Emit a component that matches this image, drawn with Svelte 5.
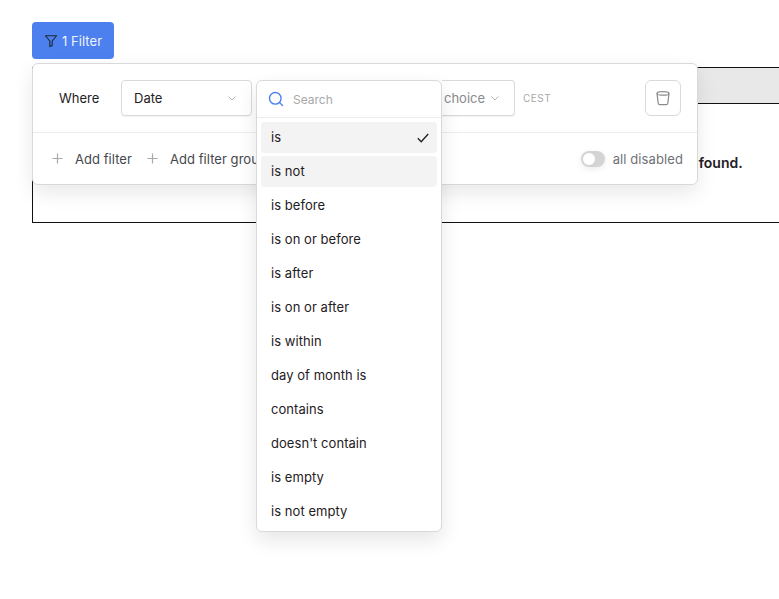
<script>
  const operators = [
    "is", "is not", "is before", "is on or before", "is after", "is on or after",
    "is within", "day of month is", "contains", "doesn't contain", "is empty", "is not empty"
  ];
  let selected = "is";
  let hovered = "is not";
</script>

<main>
  <button class="filter-btn">
    <svg width="14" height="14" viewBox="0 0 24 24" fill="none" stroke="#1f2937" stroke-width="2" stroke-linejoin="round" stroke-linecap="round">
      <path d="M2.5 3h19l-7.5 9v8l-4 1.5V12z" />
    </svg>
    1 Filter
  </button>

  <div class="stage">
    <div class="table">
      <div class="thead"></div>
      <div class="empty">No results found.</div>
    </div>

    <div class="panel">
      <div class="row">
        <span class="where">Where</span>
        <div class="select date">
          <span>Date</span>
          <svg class="chev" width="10" height="10" viewBox="0 0 10 10" fill="none" stroke="#b5b5b5" stroke-width="1">
            <path d="M1.5 3.5 5 7l3.5-3.5" />
          </svg>
        </div>
        <div class="select op-slot"></div>
        <div class="select value">
          <span>choice</span>
          <svg class="chev" width="10" height="10" viewBox="0 0 10 10" fill="none" stroke="#b5b5b5" stroke-width="1">
            <path d="M1.5 3.5 5 7l3.5-3.5" />
          </svg>
        </div>
        <span class="tz">CEST</span>
        <button class="trash" aria-label="Delete filter">
          <svg width="16" height="16" viewBox="0 0 16 16" fill="none" stroke="#8a8a8a" stroke-width="1.2">
            <ellipse cx="8" cy="3.4" rx="6" ry="1.8" />
            <path d="M2 3.4l1.2 9.8c.1.9.8 1.5 1.7 1.5h6.2c.9 0 1.6-.6 1.7-1.5L14 3.4" />
          </svg>
        </button>
      </div>
      <div class="footer">
        <button class="add">
          <svg width="11" height="11" viewBox="0 0 11 11" stroke="#a8a8a8" stroke-width="1.2"><path d="M5.5.5v10M.5 5.5h10" /></svg>
          Add filter
        </button>
        <button class="add">
          <svg width="11" height="11" viewBox="0 0 11 11" stroke="#a8a8a8" stroke-width="1.2"><path d="M5.5.5v10M.5 5.5h10" /></svg>
          Add filter group
        </button>
        <div class="toggle-wrap">
          <span class="toggle"><span class="knob"></span></span>
          <span>all disabled</span>
        </div>
      </div>
    </div>

    <div class="dropdown">
      <div class="search">
        <svg width="16" height="16" viewBox="0 0 16 16" fill="none" stroke="#4c80ee" stroke-width="1.4" stroke-linecap="round">
          <circle cx="7.3" cy="7.3" r="5.8" />
          <path d="M11.5 11.5 14.5 14.5" />
        </svg>
        <span>Search</span>
      </div>
      <ul>
        {#each operators as op}
          <li class:selected={op === selected} class:hovered={op === hovered}>
            {op}
            {#if op === selected}
              <svg width="12" height="10" viewBox="0 0 12 10" fill="none" stroke="#1f2023" stroke-width="1.3">
                <path d="M.8 5.2 4.2 8.8 11.2 1" />
              </svg>
            {/if}
          </li>
        {/each}
      </ul>
    </div>
  </div>
</main>

<style>
  :global(body) {
    margin: 0;
    background: #fff;
    overflow: hidden;
  }
  main {
    height: 599px;
    padding: 22px 0 0 32px;
    box-sizing: border-box;
    overflow: hidden;
    font-family: Inter, "Liberation Sans", sans-serif;
    font-size: 13px;
    color: #1f2023;
  }
  button {
    font: inherit;
    cursor: pointer;
  }
  .filter-btn {
    display: flex;
    align-items: center;
    gap: 4px;
    width: 82px;
    height: 37px;
    padding: 0 0 0 12px;
    border: none;
    border-radius: 4px;
    background: #4c80ee;
    color: #eef3fe;
    letter-spacing: 0.05px;
  }
  .stage {
    position: relative;
    margin-top: 8px;
  }
  .table {
    width: 1304px;
    height: 156px;
    box-sizing: border-box;
    border: 1px solid #111;
    border-width: 1px 0 1px 1px;
  }
  .thead {
    height: 35px;
    background: #e8e8e8;
    border-bottom: 1px solid #111;
  }
  .empty {
    height: 119px;
    box-sizing: border-box;
    padding-top: 50px;
    text-align: center;
    font-size: 14px;
    font-weight: 600;
    line-height: 17px;
    color: #1f2023;
  }
  .panel {
    position: absolute;
    left: 0;
    top: -4px;
    width: 666px;
    height: 122px;
    box-sizing: border-box;
    border: 1px solid #d9d9d9;
    border-radius: 6px;
    background: #fff;
    box-shadow: 0 8px 20px rgba(0, 0, 0, 0.09);
  }
  .row {
    display: flex;
    align-items: center;
    height: 69px;
    padding: 0 16px 1px 26px;
    box-sizing: border-box;
    border-bottom: 1px solid #ececec;
  }
  .where {
    width: 62px;
  }
  .select {
    display: flex;
    align-items: center;
    justify-content: space-between;
    height: 36px;
    box-sizing: border-box;
    border: 1px solid #d9d9d9;
    border-radius: 4px;
    box-shadow: 0 1px 1px rgba(0, 0, 0, 0.05);
  }
  .date {
    width: 131px;
    padding: 0 14px 0 12px;
  }
  .op-slot {
    width: 186px;
    margin-left: 4px;
    border: none;
    box-shadow: none;
  }
  .value {
    width: 73px;
    padding: 0 14px 0 2px;
    border-left: none;
    border-radius: 0 4px 4px 0;
    color: #8a8a8a;
  }
  .tz {
    margin-left: 8px;
    font-size: 10px;
    letter-spacing: 0.5px;
    color: #a8a8a8;
  }
  .trash {
    display: flex;
    align-items: center;
    justify-content: center;
    width: 36px;
    height: 36px;
    margin-left: auto;
    padding: 0;
    border: 1px solid #d9d9d9;
    border-radius: 6px;
    background: #fff;
  }
  .footer {
    display: flex;
    align-items: center;
    height: 51px;
    padding: 0 14px 0 19px;
    box-sizing: border-box;
  }
  .add {
    display: flex;
    align-items: center;
    gap: 12px;
    margin-right: 15px;
    padding: 0;
    border: none;
    background: none;
    color: #45474c;
    letter-spacing: 0.05px;
  }
  .toggle-wrap {
    display: flex;
    align-items: center;
    gap: 8px;
    margin-left: auto;
    color: #6f7176;
    letter-spacing: 0.1px;
  }
  .toggle {
    display: block;
    width: 24px;
    height: 16px;
    padding: 2px;
    box-sizing: border-box;
    border-radius: 8px;
    background: #d4d4d4;
    box-shadow: 0 2px 6px rgba(0, 0, 0, 0.08);
  }
  .knob {
    display: block;
    width: 12px;
    height: 12px;
    border-radius: 50%;
    background: #fff;
  }
  .dropdown {
    position: absolute;
    left: 224px;
    top: 13px;
    width: 186px;
    height: 452px;
    box-sizing: border-box;
    border: 1px solid #d9d9d9;
    border-radius: 6px;
    background: #fff;
    box-shadow: 0 8px 20px rgba(0, 0, 0, 0.1);
  }
  .search {
    display: flex;
    align-items: center;
    gap: 9px;
    height: 37px;
    padding: 0 11px;
    box-sizing: border-box;
    border-bottom: 1px solid #ececec;
    font-size: 12px;
    color: #a8a8a8;
  }
  ul {
    display: flex;
    flex-direction: column;
    gap: 3px;
    list-style: none;
    margin: 0;
    padding: 4px;
  }
  li {
    display: flex;
    align-items: center;
    justify-content: space-between;
    height: 31px;
    box-sizing: border-box;
    padding: 0 8px 2px 10px;
    border-radius: 4px;
    letter-spacing: 0.05px;
  }
  li svg {
    margin-top: 2px;
  }
  li.selected,
  li.hovered {
    background: #f3f3f3;
  }
</style>
